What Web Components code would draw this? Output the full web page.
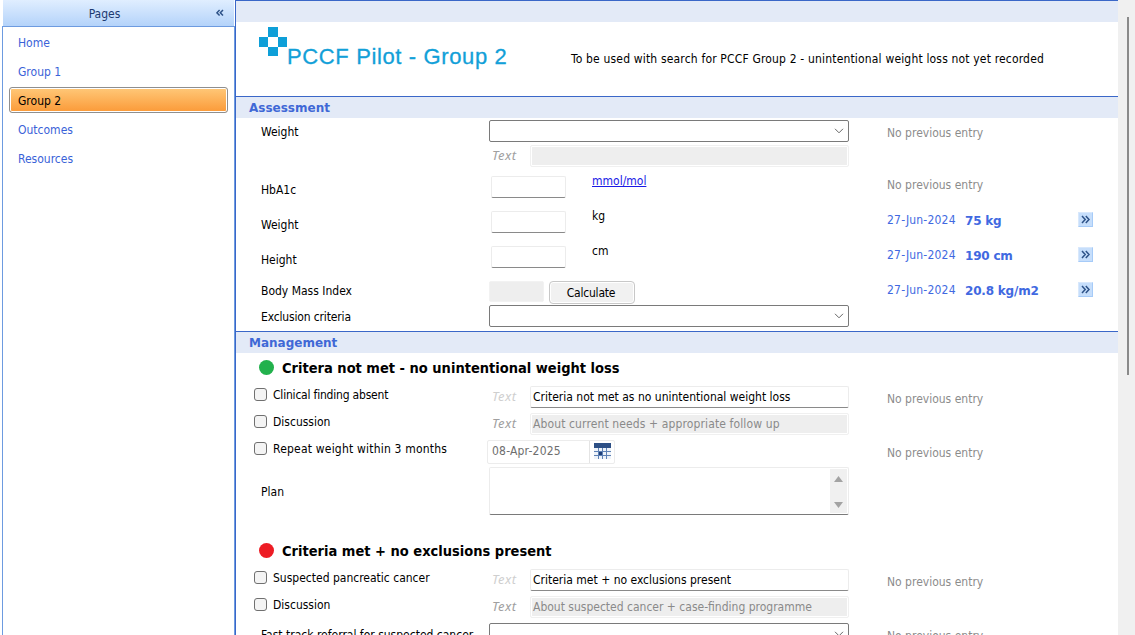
<!DOCTYPE html>
<html>
<head>
<meta charset="utf-8">
<title>PCCF Pilot</title>
<style>
 html, body { margin: 0; height: 100%; overflow: hidden; background: #fff; }
 body { font-family: "DejaVu Sans Condensed", "DejaVu Sans", sans-serif; font-stretch: condensed; font-size: 12px; color: #000; }
</style>
</head>
<body>
<pccf-app>
 <pccf-sidebar slot="side" heading="Pages">
  <pccf-nav>Home</pccf-nav>
  <pccf-nav>Group 1</pccf-nav>
  <pccf-nav selected>Group 2</pccf-nav>
  <pccf-nav>Outcomes</pccf-nav>
  <pccf-nav>Resources</pccf-nav>
 </pccf-sidebar>

 <pccf-banner title-text="PCCF Pilot - Group 2">To be used with search for PCCF Group 2 - unintentional weight loss not yet recorded</pccf-banner>

 <pccf-section heading="Assessment" style="--gap:2px">
  <pccf-row style="--top:0px">
   <span slot="label">Weight</span>
   <pccf-select slot="control"></pccf-select>
   <pccf-prev slot="prev">No previous entry</pccf-prev>
  </pccf-row>
  <pccf-row style="--top:3px">
   <pccf-text slot="control" disabled></pccf-text>
  </pccf-row>
  <pccf-row style="--top:9px">
   <span slot="label" style="padding-top:4px">HbA1c</span>
   <pccf-unit slot="control"><a href="#">mmol/mol</a></pccf-unit>
   <pccf-prev slot="prev" style="--nudge:-4px">No previous entry</pccf-prev>
  </pccf-row>
  <pccf-row style="--top:13px">
   <span slot="label" style="padding-top:4px">Weight</span>
   <pccf-unit slot="control">kg</pccf-unit>
   <pccf-prev slot="prev" date="27-Jun-2024" value="75 kg"></pccf-prev>
  </pccf-row>
  <pccf-row style="--top:13px">
   <span slot="label" style="padding-top:4px">Height</span>
   <pccf-unit slot="control">cm</pccf-unit>
   <pccf-prev slot="prev" date="27-Jun-2024" value="190 cm"></pccf-prev>
  </pccf-row>
  <pccf-row style="--top:13px;--h:21px">
   <span slot="label" style="padding-bottom:5px">Body Mass Index</span>
   <pccf-calc slot="control"></pccf-calc>
   <pccf-prev slot="prev" date="27-Jun-2024" value="20.8 kg/m2"></pccf-prev>
  </pccf-row>
  <pccf-row style="--top:3px">
   <span slot="label" style="letter-spacing:-.15px">Exclusion criteria</span>
   <pccf-select slot="control"></pccf-select>
  </pccf-row>
 </pccf-section>

 <pccf-section heading="Management" style="--gap:0px">
  <pccf-heading color="#22b14c">Critera not met - no unintentional weight loss</pccf-heading>
  <pccf-row style="--top:4px">
   <pccf-check slot="label" style="letter-spacing:-.2px">Clinical finding absent</pccf-check>
   <pccf-text slot="control" muted>Criteria not met as no unintentional weight loss</pccf-text>
   <pccf-prev slot="prev">No previous entry</pccf-prev>
  </pccf-row>
  <pccf-row style="--top:5px">
   <pccf-check slot="label">Discussion</pccf-check>
   <pccf-text slot="control" disabled style="letter-spacing:.12px">About current needs + appropriate follow up</pccf-text>
  </pccf-row>
  <pccf-row style="--top:5px;--h:24px">
   <pccf-check slot="label" style="letter-spacing:.2px">Repeat weight within 3 months</pccf-check>
   <pccf-date slot="control">08-Apr-2025</pccf-date>
   <pccf-prev slot="prev">No previous entry</pccf-prev>
  </pccf-row>
  <pccf-row style="--top:3px;--h:48px">
   <span slot="label">Plan</span>
   <pccf-area slot="control"></pccf-area>
  </pccf-row>
  <pccf-heading color="#ed1c24" style="margin-top:21px">Criteria met + no exclusions present</pccf-heading>
  <pccf-row style="--top:4px">
   <pccf-check slot="label">Suspected pancreatic cancer</pccf-check>
   <pccf-text slot="control" muted>Criteria met + no exclusions present</pccf-text>
   <pccf-prev slot="prev">No previous entry</pccf-prev>
  </pccf-row>
  <pccf-row style="--top:5px">
   <pccf-check slot="label">Discussion</pccf-check>
   <pccf-text slot="control" disabled>About suspected cancer + case-finding programme</pccf-text>
  </pccf-row>
  <pccf-row style="--top:5px">
   <span slot="label">Fast track referral for suspected cancer</span>
   <pccf-select slot="control"></pccf-select>
   <pccf-prev slot="prev">No previous entry</pccf-prev>
  </pccf-row>
 </pccf-section>
</pccf-app>

<script>
const def = (name, html, setup) => {
 customElements.define(name, class extends HTMLElement {
  connectedCallback() {
   const root = this.attachShadow({ mode: "open" })
   root.innerHTML = typeof html === "function" ? html(this) : html
   if (setup) setup(this, root)
  }
 })
}

def("pccf-app", `<style>
  :host { display: grid; grid-template-columns: 235px 1fr 17px; height: 635px; overflow: hidden; }
  main { border-left: 1px solid #3a67c8; border-top: 1px solid #3a67c8; overflow: hidden; min-width: 0; }
  .bar { background: #f0f0f0; display: flex; justify-content: center; padding-top: 17px; }
  .thumb { width: 2px; height: 358px; background: #8a8a8a; margin-left: 3px; }
 </style>
 <slot name="side"></slot>
 <main><slot></slot></main>
 <div class="bar"><div class="thumb"></div></div>`)

def("pccf-sidebar", el => `<style>
  :host { display: flex; flex-direction: column; padding-left: 2px; height: 635px; box-sizing: border-box; }
  header { height: 26px; box-sizing: border-box; margin-left: 1px; margin-right: 1px; padding: 2px 28px 0 0; display: flex; align-items: center; justify-content: center; position: relative; color: #1c3a70;
   background: linear-gradient(#e0eeff, #b4d3fa); }
  svg { position: absolute; right: 10px; top: 9px; }
  .list { flex: 1; border: 1px solid #6d9be0; border-bottom: 0; padding: 2px 6px 0 6px; display: flex; flex-direction: column; gap: 3px; }
 </style>
 <header>${el.getAttribute("heading")}
  <svg width="8" height="8" viewBox="0 0 8 8" fill="none" stroke="#2d5288" stroke-width="1.5"><path d="M3.6 1 .9 3.8 3.6 6.6M7 1 4.3 3.8 7 6.6"/></svg>
 </header>
 <div class="list"><slot></slot></div>`)

def("pccf-nav", `<style>
  :host { display: flex; align-items: center; height: 26px; box-sizing: border-box; padding: 2px 0 0 9px; color: #3a62d8; }
  :host([selected]) { color: #000; border: 1px solid #8f8f8f; border-radius: 3px; padding-left: 8px; box-shadow: inset 0 0 0 1px #fff;
   background: linear-gradient(#ffc878, #fb9a38); }
 </style><slot></slot>`)

def("pccf-banner", el => `<style>
  :host { display: block; }
  .top { height: 21px; background: #e3eaf7; }
  .body { height: 74px; display: flex; box-sizing: border-box; padding: 5px 0 0 23px; }
  svg { flex: none; }
  h1 { margin: 18px 0 0; font: 400 22px "Liberation Sans", Arial, sans-serif; letter-spacing: .63px; color: #12a0d8; -webkit-text-stroke: .3px #12a0d8; width: 284px; flex: none; line-height: 24px; white-space: nowrap; }
  p { margin: 25px 0 0; white-space: nowrap; letter-spacing: .17px; }
 </style>
 <div class="top"></div>
 <div class="body">
  <svg width="28" height="29" viewBox="0 0 28 29" fill="#0e9fd8"><rect x="9" y="0" width="10" height="10"/><rect x="0" y="10" width="9" height="10"/><rect x="19" y="10" width="9" height="10"/><rect x="9" y="20" width="10" height="9"/></svg>
  <h1>${el.getAttribute("title-text")}</h1>
  <p><slot></slot></p>
 </div>`)

def("pccf-section", el => `<style>
  :host { display: block; }
  h2 { margin: 0; height: 22px; box-sizing: border-box; border-top: 1px solid #3a67c8; background: #e3eaf7; padding: 1px 0 0 13px; color: #3f68d6;
   font: 700 12px/20px "DejaVu Sans", sans-serif; }
  .body { padding-top: var(--gap); padding-bottom: 4px; }
 </style>
 <h2>${el.getAttribute("heading")}</h2>
 <div class="body"><slot></slot></div>`)

def("pccf-row", `<style>
  :host { display: grid; grid-template-columns: 253px 398px 1fr; height: var(--h, 22px); margin-top: var(--top, 0); }
  .label { padding: 2px 0 0 25px; display: flex; align-items: center; white-space: nowrap; }
  ::slotted(pccf-check) { align-self: flex-start; margin: -1px 0 0 -7px; }
 </style>
 <div class="label"><slot name="label"></slot></div>
 <div><slot name="control"></slot></div>
 <div><slot name="prev"></slot></div>`)

def("pccf-select", `<style>
  :host { display: flex; align-items: center; justify-content: flex-end; height: 22px; width: 360px; box-sizing: border-box; border: 1px solid #7a7a7a; border-radius: 2px; background: #fff; padding-right: 4px; }
 </style>
 <svg width="10" height="6" viewBox="0 0 10 6" fill="none" stroke="#666"><path d="M1 .8 5 4.8 9 .8"/></svg>`)

def("pccf-text", `<style>
  :host { display: flex; height: 22px; align-items: center; width: 360px; }
  i { width: 41px; padding-left: 3px; margin-top: -2px; box-sizing: border-box; color: #a0a0a0; flex: none; font: italic 13px "Noto Sans", sans-serif; letter-spacing: .5px; }
  :host([muted]) i { color: #cfcfcf; }
  div { flex: 1; height: 22px; box-sizing: border-box; line-height: 20px; padding-left: 2px; border: 1px solid #ececec; border-bottom-color: #8a8a8a; border-radius: 2px; background: #fff; white-space: nowrap; overflow: hidden; }
  :host([disabled]) div { border-color: #f0f0f0; background: #eee; background-clip: padding-box; box-shadow: inset 0 0 0 1px #fff; color: #8a8a8a; }
 </style>
 <i>Text</i><div><slot></slot></div>`)

def("pccf-unit", `<style>
  :host { display: flex; }
  .box { width: 75px; height: 22px; margin-left: 2px; box-sizing: border-box; border: 1px solid #ececec; border-bottom-color: #8a8a8a; border-radius: 2px; }
  .u { margin: -2px 0 0 26px; }
  ::slotted(a) { color: #1a1ae6; }
 </style>
 <div class="box"></div><div class="u"><slot></slot></div>`)

def("pccf-calc", `<style>
  :host { display: flex; gap: 5px; }
  .out { width: 55px; height: 21px; box-sizing: border-box; background: #eee; border: 1px solid #f2f2f2; border-radius: 2px; }
  button { width: 86px; height: 23px; font: inherit; letter-spacing: -.2px; color: #000; border: 1px solid #c8c8c8; border-radius: 4px; padding: 0 2px 0 0; background: #f1f1f1; box-shadow: inset 0 0 0 1px #fff; }
 </style>
 <div class="out"></div><button type="button">Calculate</button>`)

def("pccf-check", `<style>
  :host { display: flex; gap: 6px; line-height: 16px; }
  span { width: 13px; height: 13px; box-sizing: border-box; border: 1px solid #707070; border-radius: 3px; background: #f4f4f4; flex: none; margin-top: 1px; }
 </style>
 <span></span><div><slot></slot></div>`)

def("pccf-date", `<style>
  :host { display: flex; width: 128px; height: 24px; box-sizing: border-box; margin-left: -2px; border: 1px solid #ececec; border-radius: 2px; color: #6e6e6e; letter-spacing: .2px; }
  div { width: 102px; padding-left: 4px; box-sizing: border-box; border-right: 1px solid #e4e4e4; line-height: 20px; }
  svg { margin: 2px 0 0 4px; }
 </style>
 <div><slot></slot></div>
 <svg width="17" height="16" viewBox="0 0 17 16">
  <rect width="17" height="5" fill="#2c4f85"/>
  <rect y="5" width="17" height="11" fill="#eef3f9"/>
  <path d="M0 8.5H17M0 12.5H17M4.5 5V16M8.5 5V16M12.5 5V16" stroke="#5f82b5" fill="none"/>
  <rect x="5" y="9" width="3" height="3" fill="#1f3f78"/>
 </svg>`)

def("pccf-area", `<style>
  :host { display: flex; justify-content: flex-end; width: 360px; height: 48px; box-sizing: border-box; border: 1px solid #ececec; border-bottom-color: #7a7a7a; border-radius: 2px; padding: 1px; }
  div { width: 17px; background: #f0f0f0; display: flex; flex-direction: column; justify-content: space-between; align-items: center; padding: 7px 0 5px; box-sizing: border-box; }
 </style>
 <div>
  <svg width="9" height="6"><path d="M4.5 0 9 6H0Z" fill="#a3a3a3"/></svg>
  <svg width="9" height="6"><path d="M0 0H9L4.5 6Z" fill="#a3a3a3"/></svg>
 </div>`)

def("pccf-heading", el => `<style>
  :host { display: flex; align-items: center; gap: 8px; height: 29px; padding-left: 23px; font: 700 14.5px "DejaVu Sans Condensed", "DejaVu Sans", sans-serif; font-stretch: condensed; }
  span { width: 15px; height: 15px; border-radius: 50%; background: ${el.getAttribute("color")}; flex: none; }
 </style>
 <span></span><div><slot></slot></div>`)

def("pccf-prev", el => {
 const date = el.getAttribute("date")
 if (!date) return `<style>:host { display: block; color: #8c8c8c; padding-top: calc(6px + var(--nudge, 0px)); }</style><slot></slot>`
 return `<style>
  :host { display: flex; color: #4169e1; padding-top: 2px; height: 22px; box-sizing: border-box; }
  .d { width: 78px; letter-spacing: .2px; }
  b { font: 700 12px "DejaVu Sans", sans-serif; letter-spacing: -.2px; line-height: 17px; width: 113px; }
  span { width: 15px; height: 15px; margin-top: -1px; box-sizing: border-box; background: #c6defb; border: 1px solid #a6cbf8; border-top-color: #d8e8fc; border-left-color: #d8e8fc; display: flex; align-items: center; justify-content: center; }
 </style>
 <div class="d">${date}</div><b>${el.getAttribute("value")}</b>
 <span><svg width="9" height="9" viewBox="0 0 9 9" fill="none" stroke="#2d5288" stroke-width="1.5"><path d="M1 1 4.2 4.5 1 8M4.8 1 8 4.5 4.8 8"/></svg></span>`
})
</script>
</body>
</html>
